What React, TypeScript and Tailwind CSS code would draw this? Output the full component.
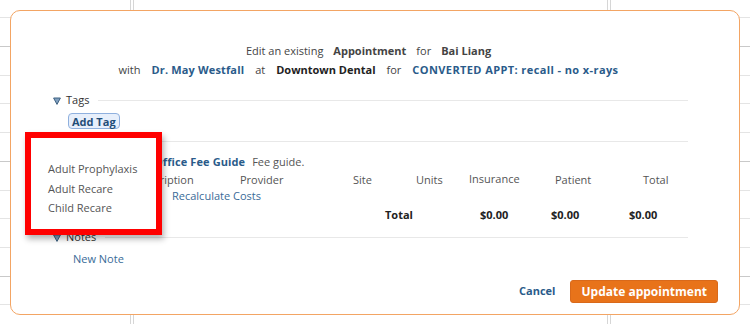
import React from "react";

const bgRows = [
  "h-[18px] border-[#e4e4e4]",
  "h-[29px] border-[#c9c9c9]",
  "h-[29px] border-[#e4e4e4]",
  "h-[28px] border-[#e4e4e4]",
  "h-[29px] border-[#e4e4e4]",
  "h-[29px] border-[#c9c9c9]",
  "h-[29px] border-[#e4e4e4]",
  "h-[28px] border-[#e4e4e4]",
  "h-[29px] border-[#e4e4e4]",
  "h-[29px] border-[#c9c9c9]",
  "h-[28px] border-[#e4e4e4]",
];

function BgColumn({ className }: { className: string }) {
  return (
    <div className={className}>
      {bgRows.map((c, i) => (
        <div key={i} className={`${c} border-b`} />
      ))}
    </div>
  );
}

function Tri() {
  return (
    <svg width="8" height="8" viewBox="0 0 8 8" className="shrink-0">
      <path d="M0.6 1 L7.4 1 L4 7.4 Z" fill="#7f9fbf" stroke="#3f6282" strokeWidth="1" strokeLinejoin="round" />
    </svg>
  );
}

function SectionHeader({ label }: { label: string }) {
  return (
    <div className="flex h-[19px] items-center">
      <Tri />
      <span className="ml-[5px] text-[#333]">{label}</span>
      <div className="ml-[9px] h-px flex-1 bg-[#e8e8e8]" />
    </div>
  );
}

export default function App() {
  return (
    <div className="relative h-[324px] w-[750px] overflow-hidden bg-white font-['Open_Sans',sans-serif] text-[11px]">
      {/* calendar backdrop */}
      <div className="flex h-full">
        <BgColumn className="h-full w-[131px] border-r border-[#d6d6d6]" />
        <div className="w-[2px]" />
        <BgColumn className="h-full w-[475px] border-x border-[#d6d6d6]" />
        <div className="w-[2px]" />
        <BgColumn className="h-full flex-1 border-l border-[#d6d6d6]" />
      </div>

      {/* modal */}
      <div className="absolute left-[10px] top-[10px] flex h-[305px] w-[730px] flex-col rounded-[10px] border border-[#f3a564] bg-white">
        <div className="mx-[42px] mr-[51px] flex flex-col">
          {/* title */}
          <div className="mt-[30px] flex flex-col items-center pr-[4px] leading-[19px] text-[#444]">
            <div className="flex gap-[10px]">
              <span>Edit an existing</span>
              <span className="font-bold">Appointment</span>
              <span>for</span>
              <span className="font-bold">Bai Liang</span>
            </div>
            <div className="flex gap-[11px]">
              <span>with</span>
              <span className="font-bold tracking-[0.15px] text-[#2a5b8a]">Dr. May Westfall</span>
              <span>at</span>
              <span className="font-bold text-[#222]">Downtown Dental</span>
              <span>for</span>
              <span className="font-bold tracking-[0.4px] text-[#2a5b8a]">CONVERTED APPT: recall - no x-rays</span>
            </div>
          </div>

          {/* tags */}
          <div className="mt-[12px]">
            <SectionHeader label="Tags" />
          </div>
          <div className="mt-[3px] flex">
            <button className="ml-[15px] flex h-[16px] items-center rounded-[4px] border border-[#8fb0de] bg-[#e7effb] px-[3px] text-[11px] font-bold leading-none text-[#1f4d78]">
              Add Tag
            </button>
          </div>

          {/* fees */}
          <div className="mt-[3px]">
            <SectionHeader label="Fees" />
          </div>
          <div className="ml-[82px] flex flex-col text-[#555]">
            <div className="mt-[2px] flex h-[18px] items-center">
              <span className="ml-[19px] font-bold tracking-[0.1px] text-[#2a5b8a]">Office Fee Guide</span>
              <span className="ml-[7px]">Fee guide.</span>
            </div>
            <div className="flex h-[18px] items-center">
              <span className="w-[105px]">Description</span>
              <span className="w-[113px]">Provider</span>
              <span className="w-[63px]">Site</span>
              <span className="w-[53px]">Units</span>
              <span className="-mt-[2px] w-[86px]">Insurance</span>
              <span className="w-[88px]">Patient</span>
              <span>Total</span>
            </div>
            <div className="flex h-[15px] items-center">
              <span className="ml-[37px] text-[#3a6b98]">Recalculate Costs</span>
            </div>
            <div className="flex h-[22px] items-center font-bold text-[#222]">
              <span className="ml-[250px] w-[95px]">Total</span>
              <span className="w-[71px]">$0.00</span>
              <span className="w-[78px]">$0.00</span>
              <span>$0.00</span>
            </div>
          </div>

          {/* notes */}
          <div className="mt-[2px]">
            <SectionHeader label="Notes" />
          </div>
          <div className="mt-[3px] flex h-[19px] items-center">
            <span className="ml-[20px] text-[#3a6b98]">New Note</span>
          </div>
        </div>

        {/* footer */}
        <div className="mt-[11px] flex items-center justify-end pr-[21px]">
          <span className="font-bold text-[#2a5b8a]">Cancel</span>
          <button className="ml-[15px] flex h-[23px] items-center rounded-[3px] border border-[#d9691a] bg-[#e8731a] px-[10px] text-[12px] font-bold text-white">
            Update appointment
          </button>
        </div>
      </div>

      {/* dropdown popup (tag suggestions) */}
      <div className="absolute left-[25px] top-[132px] h-[103px] w-[137px] border-[6px] border-[#ff0000] bg-white pl-[17px] pt-[21px] text-[#555] shadow-[2px_4px_6px_rgba(0,0,0,0.3)]">
        <div className="leading-[19.5px]">Adult Prophylaxis</div>
        <div className="leading-[19.5px]">Adult Recare</div>
        <div className="leading-[19.5px]">Child Recare</div>
      </div>
    </div>
  );
}
